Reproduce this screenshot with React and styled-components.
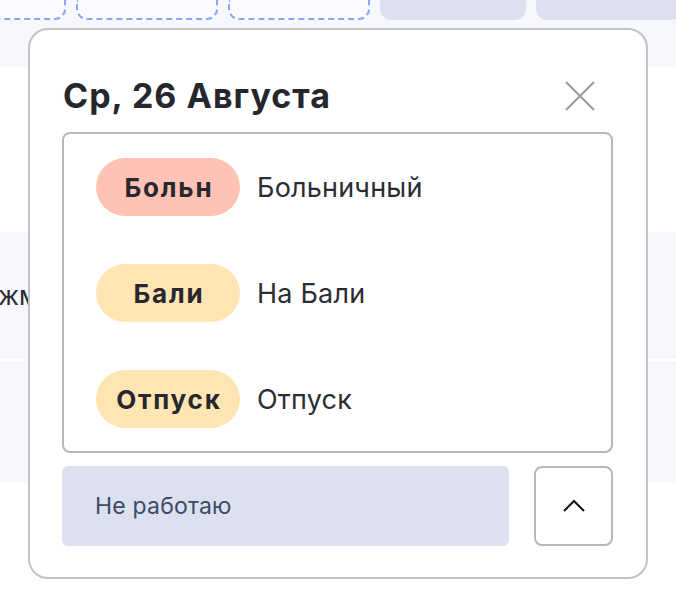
import React from "react";
import styled, { createGlobalStyle } from "styled-components";

const Global = createGlobalStyle`
  html, body { margin: 0; padding: 0; background: #ffffff; }
  body { font-family: Inter, "Noto Sans", sans-serif; overflow: hidden; }
  * { box-sizing: border-box; }
`;

const Page = styled.div`
  position: relative;
  width: 676px;
  height: 608px;
  overflow: hidden;
  background: #ffffff;
`;

const TopStrip = styled.div`
  height: 67px;
  background: #f7f8fd;
`;

const CellRow = styled.div`
  display: flex;
  gap: 10px;
  margin-left: -76px;
`;

const Cell = styled.div`
  flex: 0 0 ${(p) => (p.$filled ? 146 : 142)}px;
  height: 20px;
  border-radius: 0 0 11px 11px;
  background: ${(p) => (p.$filled ? "#dde0ee" : "#fafbff")};
  border: ${(p) => (p.$filled ? "none" : "2px dashed #86a6fb")};
  border-top: none;
`;

const Gap = styled.div`
  height: 165px;
`;

const BgRow = styled.div`
  height: ${(p) => p.$h}px;
  background: #f7f8fd;
  border-bottom: 2px solid #ffffff;
  display: flex;
  align-items: center;
`;

const BgText = styled.span`
  font-size: 26px;
  color: #2b2d33;
  margin-left: -2px;
  white-space: nowrap;
`;

const Popup = styled.div`
  position: absolute;
  left: 28px;
  top: 28px;
  width: 620px;
  height: 551px;
  background: #ffffff;
  border: 2px solid #c2c2c4;
  border-radius: 20px;
  padding: 44px 33px 31px 32px;
  display: flex;
  flex-direction: column;
`;

const Header = styled.div`
  display: flex;
  align-items: center;
  justify-content: space-between;
  height: 44px;
  margin-bottom: 14px;
`;

const Title = styled.h2`
  margin: 0 0 0 1px;
  font-size: 34px;
  line-height: 44px;
  font-weight: 700;
  color: #25272d;
  letter-spacing: 1px;
`;

const Close = styled.button`
  width: 32px;
  height: 32px;
  margin-right: 17px;
  padding: 0;
  border: none;
  background: transparent;
  display: flex;
  align-items: center;
  justify-content: center;
`;

const List = styled.div`
  border: 2px solid #b8b8ba;
  border-radius: 8px;
  height: 321px;
  padding: 24px 32px;
  display: flex;
  flex-direction: column;
  gap: 48px;
`;

const Item = styled.div`
  display: flex;
  align-items: center;
  gap: 17px;
  height: 58px;
`;

const Pill = styled.span`
  width: 144px;
  height: 58px;
  border-radius: 29px;
  background: ${(p) => p.$color};
  display: flex;
  align-items: center;
  justify-content: center;
  font-size: 26px;
  font-weight: 700;
  letter-spacing: 1.8px;
  text-indent: 1.8px;
  color: #26282e;
`;

const Label = styled.span`
  font-size: 27px;
  color: #2b2d33;
  letter-spacing: 0.2px;
`;

const Bottom = styled.div`
  display: flex;
  gap: 25px;
  margin-top: 13px;
  height: 80px;
`;

const Select = styled.div`
  flex: 1;
  background: #dde0ee;
  border-radius: 6px;
  display: flex;
  align-items: center;
  padding-left: 33px;
  font-size: 23px;
  color: #3a4a6a;
  letter-spacing: 0.2px;
`;

const Toggle = styled.button`
  width: 79px;
  height: 80px;
  border: 2px solid #b8b8ba;
  border-radius: 8px;
  background: #ffffff;
  display: flex;
  align-items: center;
  justify-content: center;
  padding: 0;
`;

const items = [
  { code: "Больн", label: "Больничный", color: "#ffc2b4" },
  { code: "Бали", label: "На Бали", color: "#ffe5b4" },
  { code: "Отпуск", label: "Отпуск", color: "#ffe5b4" },
];

export default function App() {
  return (
    <>
      <Global />
      <Page>
        <TopStrip>
          <CellRow>
            <Cell />
            <Cell />
            <Cell />
            <Cell $filled />
            <Cell $filled />
          </CellRow>
        </TopStrip>
        <Gap />
        <BgRow $h={129}>
          <BgText>жмых</BgText>
        </BgRow>
        <BgRow $h={123} />
        <Popup>
          <Header>
            <Title>Ср, 26 Августа</Title>
            <Close aria-label="Закрыть">
              <svg width="30" height="30" viewBox="0 0 30 30">
                <path d="M1 1 L29 29 M29 1 L1 29" stroke="#9a9a9c" strokeWidth="2" fill="none" />
              </svg>
            </Close>
          </Header>
          <List>
            {items.map((it) => (
              <Item key={it.code}>
                <Pill $color={it.color}>{it.code}</Pill>
                <Label>{it.label}</Label>
              </Item>
            ))}
          </List>
          <Bottom>
            <Select>Не работаю</Select>
            <Toggle aria-label="Свернуть">
              <svg width="24" height="14" viewBox="0 0 24 14">
                <path d="M2 12 L12 2 L22 12" stroke="#111" strokeWidth="2" fill="none" />
              </svg>
            </Toggle>
          </Bottom>
        </Popup>
      </Page>
    </>
  );
}
